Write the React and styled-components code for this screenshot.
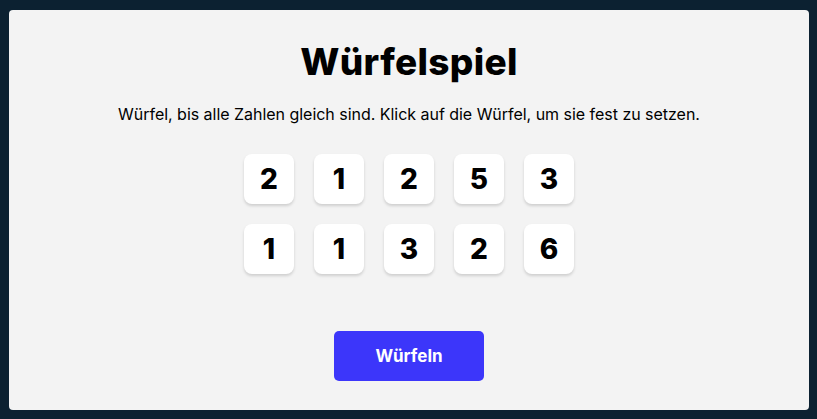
import React, { useState } from 'react';
import styled, { createGlobalStyle } from 'styled-components';

const GlobalStyle = createGlobalStyle`
  html, body {
    margin: 0;
    background: #0c2131;
  }
  body {
    font-family: Inter, 'Liberation Sans', sans-serif;
  }
`;

const Page = styled.div`
  padding: 10px 8px 9px 9px;
`;

const Panel = styled.main`
  width: 800px;
  height: 400px;
  box-sizing: border-box;
  background: #f3f3f3;
  border-radius: 4px;
  display: flex;
  flex-direction: column;
  align-items: center;
  padding-top: 30px;

  h1 {
    margin: 0;
    font-size: 37px;
    line-height: 44px;
    font-weight: 800;
    color: #000;
    letter-spacing: 0.3px;
  }
  p {
    margin: 20px 0 0;
    font-size: 16px;
    line-height: 20px;
    color: #000;
    letter-spacing: -0.03px;
  }
`;

const Board = styled.div`
  margin-top: 30px;
  display: grid;
  grid-template-columns: repeat(5, 50px);
  gap: 20px;
`;

const Die = styled.button`
  width: 50px;
  height: 50px;
  border: none;
  border-radius: 8px;
  background: ${(p) => (p.$held ? '#dcdcff' : '#fff')};
  box-shadow: 0 2px 3px rgba(0, 0, 0, 0.15);
  font-family: Inter, sans-serif;
  font-size: 28px;
  font-weight: 800;
  color: #000;
  cursor: pointer;
  padding: 0;
`;

const RollButton = styled.button`
  margin-top: 57px;
  width: 150px;
  height: 50px;
  border: none;
  border-radius: 5px;
  background: #3c36fa;
  color: #fff;
  font-family: Inter, sans-serif;
  font-size: 17px;
  font-weight: 700;
  cursor: pointer;
`;

const initial = [2, 1, 2, 5, 3, 1, 1, 3, 2, 6];

export default function App() {
  const [dice, setDice] = useState(initial.map((value) => ({ value, held: false })));

  const toggle = (i) =>
    setDice((d) => d.map((x, j) => (j === i ? { ...x, held: !x.held } : x)));

  const roll = () =>
    setDice((d) =>
      d.map((x) => (x.held ? x : { ...x, value: Math.ceil(Math.random() * 6) }))
    );

  return (
    <Page>
      <GlobalStyle />
      <Panel>
        <h1>Würfelspiel</h1>
        <p>Würfel, bis alle Zahlen gleich sind. Klick auf die Würfel, um sie fest zu setzen.</p>
        <Board>
          {dice.map((d, i) => (
            <Die key={i} $held={d.held} onClick={() => toggle(i)}>
              {d.value}
            </Die>
          ))}
        </Board>
        <RollButton onClick={roll}>Würfeln</RollButton>
      </Panel>
    </Page>
  );
}
